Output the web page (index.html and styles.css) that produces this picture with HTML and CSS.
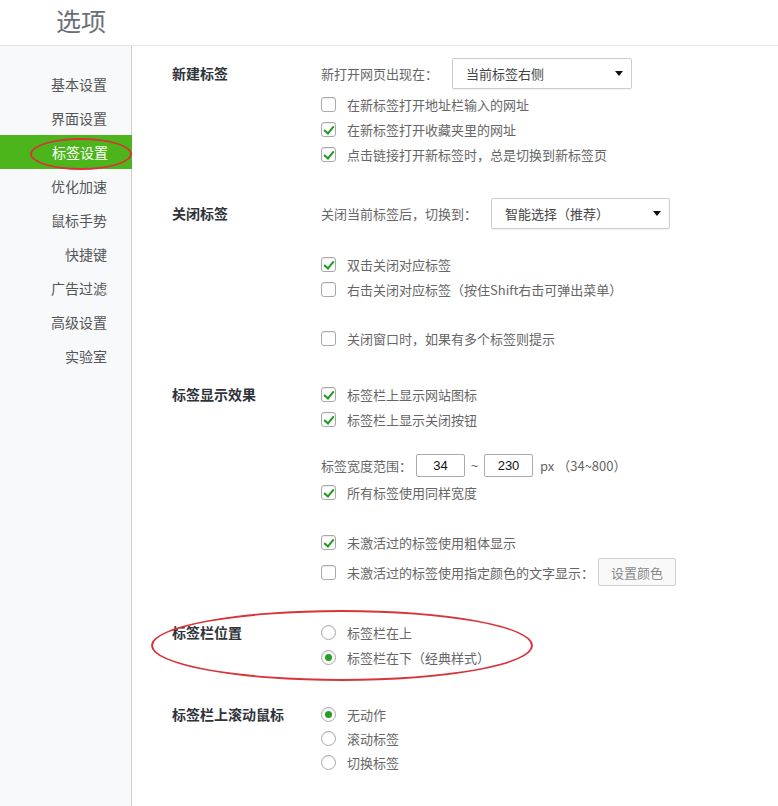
FILE: index.html
```html
<!DOCTYPE html>
<html lang="zh-CN">
<head>
<meta charset="utf-8">
<title>选项</title>
<link rel="stylesheet" href="styles.css">
</head>
<body>
<div class="page">
  <header class="header"><h1 class="title">选项</h1></header>
  <div class="body">
    <nav class="sidebar">
      <div class="nav-item">基本设置</div>
      <div class="nav-item">界面设置</div>
      <div class="nav-item active">标签设置</div>
      <div class="nav-item">优化加速</div>
      <div class="nav-item">鼠标手势</div>
      <div class="nav-item">快捷键</div>
      <div class="nav-item">广告过滤</div>
      <div class="nav-item">高级设置</div>
      <div class="nav-item">实验室</div>
    </nav>
    <main class="main">
      <section class="section">
        <div class="label tall">新建标签</div>
        <div class="opts">
          <div class="row tall">新打开网页出现在：<div class="select s1"><span>当前标签右侧</span><i class="caret"></i></div></div>
          <div class="row mt3"><span class="cb"></span>在新标签打开地址栏输入的网址</div>
          <div class="row"><span class="cb on"></span>在新标签打开收藏夹里的网址</div>
          <div class="row"><span class="cb on"></span>点击链接打开新标签时，总是切换到新标签页</div>
        </div>
      </section>
      <section class="section sec2">
        <div class="label tall">关闭标签</div>
        <div class="opts">
          <div class="row tall">关闭当前标签后，切换到：<div class="select s2"><span>智能选择（推荐）</span><i class="caret"></i></div></div>
          <div class="row mt23"><span class="cb on"></span>双击关闭对应标签</div>
          <div class="row"><span class="cb"></span>右击关闭对应标签（按住Shift右击可弹出菜单）</div>
          <div class="row mt24"><span class="cb"></span>关闭窗口时，如果有多个标签则提示</div>
        </div>
      </section>
      <section class="section sec3">
        <div class="label">标签显示效果</div>
        <div class="opts">
          <div class="row"><span class="cb on"></span>标签栏上显示网站图标</div>
          <div class="row"><span class="cb on"></span>标签栏上显示关闭按钮</div>
          <div class="row mt21">标签宽度范围：<span class="num n1">34</span><span class="tilde">~</span><span class="num">230</span><span class="unit">px （34~800）</span></div>
          <div class="row mt2"><span class="cb on"></span>所有标签使用同样宽度</div>
          <div class="row mt25"><span class="cb on"></span>未激活过的标签使用粗体显示</div>
          <div class="row btnrow"><span class="cb"></span>未激活过的标签使用指定颜色的文字显示：<span class="btn">设置颜色</span></div>
        </div>
      </section>
      <section class="section sec4">
        <div class="label">标签栏位置</div>
        <div class="opts">
          <div class="row"><span class="rd"></span>标签栏在上</div>
          <div class="row"><span class="rd on"></span>标签栏在下（经典样式）</div>
        </div>
      </section>
      <section class="section sec5">
        <div class="label">标签栏上滚动鼠标</div>
        <div class="opts">
          <div class="row r24"><span class="rd on"></span>无动作</div>
          <div class="row r24"><span class="rd"></span>滚动标签</div>
          <div class="row r24"><span class="rd"></span>切换标签</div>
        </div>
      </section>
    </main>
  </div>
  <div class="mark mark-nav"></div>
  <div class="mark mark-pos"></div>
</div>
</body>
</html>
```

FILE: styles.css
```css
* { box-sizing: border-box; }
html, body { margin: 0; padding: 0; background: #fff; }
body {
  font-family: "Noto Sans CJK SC", "Microsoft YaHei", "Noto Sans", sans-serif;
  font-size: 13px;
  color: #666;
  text-spacing-trim: space-all;
}
.page { position: relative; min-height: 806px; display: flex; flex-direction: column; }
.header {
  height: 46px;
  border-bottom: 1px solid #e6e6e6;
  display: flex;
  align-items: center;
  padding-left: 56px;
}
.title {
  margin: 0;
  font-size: 25px;
  font-weight: 400;
  color: #6a6f77;
  line-height: 1;
  margin-top: -4px;
}
.body { flex: 1; display: flex; }
.sidebar {
  width: 132px;
  flex: none;
  background: #f8f9fb;
  border-right: 1px solid #cfcfcf;
  padding-top: 21px;
}
.nav-item {
  height: 34px;
  line-height: 34px;
  text-align: right;
  padding-right: 24px;
  font-size: 14px;
  color: #555;
}
.nav-item.active { background: #4db51c; color: #fff; margin-right: -1px; }
.main { flex: 1; padding: 12px 0 0 40px; }
.section { display: flex; }
.sec2, .sec3 { margin-top: 31px; }
.sec4 { margin-top: 34px; }
.sec5 { margin-top: 32px; }
.label {
  width: 149px;
  flex: none;
  height: 25px;
  line-height: 25px;
  font-size: 14px;
  font-weight: 700;
  color: #2f333a;
}
.label.tall { height: 31px; line-height: 31px; }
.opts { display: flex; flex-direction: column; }
.row { height: 25px; display: flex; align-items: center; white-space: pre; }
.row.tall { height: 31px; }
.row.r24 { height: 24px; }
.mt2 { margin-top: 2px; }
.mt3 { margin-top: 3px; }
.mt21 { margin-top: 21px; }
.mt23 { margin-top: 23px; }
.mt24 { margin-top: 24px; }
.mt25 { margin-top: 25px; }
.btnrow { height: 28px; margin-top: 3px; }
.cb {
  width: 15px; height: 15px;
  border: 1px solid #a9a9a9;
  border-radius: 3px;
  background: #fff;
  box-shadow: inset 0 1px 1px rgba(0,0,0,0.08);
  margin-right: 11px;
  position: relative;
  flex: none;
}
.cb.on::after {
  content: "";
  position: absolute;
  left: 4px; top: 1px;
  width: 4px; height: 8px;
  border-right: 2.5px solid #1f9b22;
  border-bottom: 2.5px solid #1f9b22;
  transform: rotate(40deg);
}
.rd {
  width: 15px; height: 15px;
  border: 1px solid #a9a9a9;
  border-radius: 50%;
  background: #fff;
  box-shadow: inset 0 1px 1px rgba(0,0,0,0.08);
  margin-right: 11px;
  display: flex; align-items: center; justify-content: center;
  flex: none;
}
.rd.on::after {
  content: "";
  width: 7px; height: 7px;
  border-radius: 50%;
  background: #23a021;
}
.select {
  height: 31px;
  border: 1px solid #cdcdcd;
  border-radius: 2px;
  background: #fff;
  box-shadow: 0 1px 1px rgba(0,0,0,0.06);
  display: flex; align-items: center; justify-content: space-between;
  padding: 0 8px 0 13px;
  color: #444;
  margin-left: 14px;
}
.s1 { width: 180px; }
.s2 { width: 179px; }
.caret {
  width: 0; height: 0;
  border-left: 4.5px solid transparent;
  border-right: 4.5px solid transparent;
  border-top: 5px solid #111;
}
.num {
  width: 49px; height: 23px;
  border: 1px solid #aaa;
  border-radius: 2px;
  display: flex; align-items: center; justify-content: center;
  color: #111;
  font-family: "Liberation Sans", Arial, sans-serif;
  font-size: 13px;
}
.n1 { margin-left: 4px; }
.tilde { width: 19px; text-align: center; font-family: "Liberation Sans", Arial, sans-serif; }
.unit { margin-left: 7px; }
.btn {
  margin-left: 4px;
  width: 78px; height: 28px;
  border: 1px solid #cfcfcf;
  border-radius: 2px;
  background: #f9f9f9;
  display: flex; align-items: center; justify-content: center;
  color: #8a8a8a;
}
.mark {
  position: absolute;
  border: 2px solid #d8343a;
  border-radius: 50%;
  pointer-events: none;
}
.mark-nav { left: 30px; top: 138px; width: 102px; height: 32px; }
.mark-pos { left: 151px; top: 610px; width: 382px; height: 71px; }
```
